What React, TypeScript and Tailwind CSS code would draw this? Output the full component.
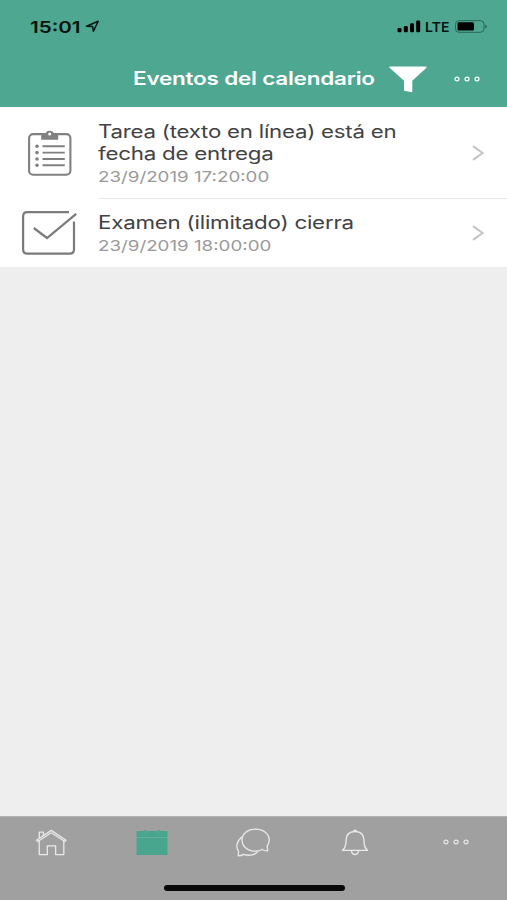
import React from "react";

function Dots({ className }: { className: string }) {
  return (
    <svg className={className} viewBox="0 0 28 8" fill="none" stroke="currentColor" strokeWidth="1.2">
      <ellipse cx="4" cy="4" rx="2" ry="1.8" />
      <ellipse cx="14" cy="4" rx="2" ry="1.8" />
      <ellipse cx="24" cy="4" rx="2" ry="1.8" />
    </svg>
  );
}

function StatusBar() {
  return (
    <div className="flex h-[52px] items-start justify-between pl-[30px] pr-[18px] pt-[16px] text-[#06150f]">
      <div className="flex items-start">
        <span className="w-[55px] origin-left scale-x-[1.25] whitespace-nowrap text-[16.5px] font-semibold leading-[22px]">15:01</span>
        <svg className="mt-[4px] h-[13px] w-[16px]" viewBox="0 0 16 13" fill="none" stroke="currentColor" strokeWidth="1.5" strokeLinejoin="round">
          <path d="M1.5 6.2 13.2 1.3 8.4 11.3 7.6 6.5Z" />
        </svg>
      </div>
      <div className="flex items-start">
        <svg className="mt-[4px] h-[13px] w-[25px]" viewBox="0 0 25 13" fill="#000">
          <rect x="0.5" y="8" width="4" height="4.3" rx="1.2" />
          <rect x="6.8" y="6" width="4" height="6.3" rx="1.2" />
          <rect x="13" y="3.3" width="4" height="9" rx="1.2" />
          <rect x="19.2" y="0.5" width="4" height="11.8" rx="1.2" />
        </svg>
        <span className="ml-[3px] w-[30px] origin-left scale-x-[1.08] text-[13px] font-semibold leading-[22px]">LTE</span>
        <svg className="mt-[4px] h-[13px] w-[34px]" viewBox="0 0 34 13">
          <rect x="0.5" y="0.7" width="28.5" height="11.6" rx="3.6" fill="none" stroke="#2b6756" strokeWidth="1" />
          <rect x="2.5" y="2.3" width="16.5" height="8.2" rx="1.5" fill="#000" />
          <path d="M30.2 4.5C32.6 5.4 32.6 7.6 30.2 8.5Z" fill="#2b6756" />
        </svg>
      </div>
    </div>
  );
}

function Clipboard() {
  return (
    <svg className="h-[46px] w-[46px]" viewBox="0 0 46 46" fill="none" stroke="#808080">
      <rect x="2.1" y="4.1" width="41.3" height="40.6" rx="4" strokeWidth="2.1" />
      <path d="M14.2 4.2H18.5C18.7 1.8 20.5.8 22.7.8S26.7 1.8 27 4.2H31.2V9.8H14.2Z" fill="#808080" stroke="none" />
      <circle cx="22.7" cy="4.1" r="1.5" fill="#fff" stroke="none" />
      <path d="M15.5 16.2H37.8M15.5 22.6H37.8M15.5 29H37.8M15.5 35.3H37.8" strokeWidth="1.9" />
      <g fill="#808080" stroke="none">
        <circle cx="10" cy="16.2" r="1.8" />
        <circle cx="10" cy="22.6" r="1.8" />
        <circle cx="10" cy="29" r="1.8" />
        <circle cx="10" cy="35.3" r="1.8" />
      </g>
    </svg>
  );
}

function CheckBox() {
  return (
    <svg className="h-[46px] w-[56px]" viewBox="0 0 56 46" fill="none" stroke="#7b7b7b" strokeWidth="2.2">
      <path d="M48 2.2H6.5Q2.1 2.2 2.1 6.4V39.2Q2.1 43.6 6.5 43.6H48.6Q53 43.6 53 39.2V11.5" />
      <path d="M12.8 18 26 28 55.2 3.8" />
    </svg>
  );
}

function Chevron() {
  return (
    <svg className="h-[16px] w-[12px]" viewBox="0 0 12 16" fill="none" stroke="#c4c4c6" strokeWidth="2.1">
      <path d="M1 1.2 10.5 8 1 14.8" />
    </svg>
  );
}

export default function App() {
  return (
    <div className="flex h-[900px] w-[507px] flex-col overflow-hidden bg-[#eeeeee] font-['Inter','Liberation_Sans',sans-serif]">
      <header className="h-[107px] shrink-0 bg-[#4ea791]">
        <StatusBar />
        <div className="flex h-[54px] items-center pl-[133px] text-white">
          <h1 className="w-[256px] origin-left scale-x-[1.25] whitespace-nowrap text-[18px] font-semibold leading-[24px] tracking-[-0.01em]">Eventos del calendario</h1>
          <svg className="h-[28px] w-[38px]" viewBox="0 0 38 28" fill="currentColor">
            <path d="M.3 2.5Q.3 1.5 1.3 1.5H36.5Q37.6 1.5 37.5 2.8L23.3 15.8V27.3L15 25.7V15.8Z" />
          </svg>
          <Dots className="ml-[26px] h-[8px] w-[28px]" />
        </div>
      </header>

      <main className="flex-1">
        <ul className="bg-white">
          <li className="flex h-[92px]">
            <div className="flex w-[98px] shrink-0 pl-[27px] pt-[23px]"><Clipboard /></div>
            <div className="flex-1 border-b border-[#e9e9e9] pt-[14px]">
              <p className="w-fit origin-left scale-x-[1.235] whitespace-nowrap text-[18px] leading-[22px] tracking-[-0.01em] text-[#424242]">Tarea (texto en línea) está en</p>
              <p className="w-fit origin-left scale-x-[1.24] whitespace-nowrap text-[18px] leading-[22px] tracking-[-0.01em] text-[#424242]">fecha de entrega</p>
              <p className="mt-[2px] w-fit origin-left scale-x-[1.25] whitespace-nowrap text-[15px] leading-[20px] text-[#9a9a9a]">23/9/2019 17:20:00</p>
            </div>
            <div className="w-[35px] border-b border-[#e9e9e9] pt-[38px]"><Chevron /></div>
          </li>
          <li className="flex h-[68px]">
            <div className="flex w-[98px] shrink-0 pl-[21px] pt-[11px]"><CheckBox /></div>
            <div className="flex-1 pt-[13px]">
              <p className="w-fit origin-left scale-x-[1.24] whitespace-nowrap text-[18px] leading-[22px] tracking-[-0.01em] text-[#424242]">Examen (ilimitado) cierra</p>
              <p className="mt-[2px] w-fit origin-left scale-x-[1.25] whitespace-nowrap text-[15px] leading-[20px] text-[#9a9a9a]">23/9/2019 18:00:00</p>
            </div>
            <div className="w-[35px] pt-[26px]"><Chevron /></div>
          </li>
        </ul>
      </main>

      <footer className="flex h-[84px] shrink-0 flex-col border-t border-[#b2b2b2] bg-[#a0a0a0] text-[#e9e9e9]">
        <nav className="grid h-[50px] grid-cols-5 items-center justify-items-center">
          <svg className="mb-px h-[28px] w-[32px]" viewBox="0 0 32 28" fill="none" stroke="currentColor" strokeWidth="1.3" strokeLinejoin="round">
            <path d="M4.2 12.3V26.6H12.3V17.8H20.6V26.6H28.8V12.3" />
            <path d="M1.5 12.2 16.3 2.4 31 12.2 29.8 13.5 16.3 4.8 2.8 13.5Z" />
            <path d="M4.3 10.1V4.2H8.4V7.4" />
          </svg>
          <svg className="mb-px h-[28px] w-[32px]" viewBox="0 0 32 28">
            <path d="M.5 3H8V2H10V3H22V2H24V3H31.5V9H.5ZM.5 10H31.5V27H.5Z" fill="#48a68e" />
            <path d="M.5 9.5H31.5" stroke="#67ae9a" />
            <path d="M9 3V6M23 3V6" stroke="#5fa994" />
          </svg>
          <svg className="mb-px h-[30px] w-[36px]" viewBox="0 0 36 30" fill="none" stroke="currentColor" strokeWidth="1.3" strokeLinejoin="round">
            <path d="M20.5 2.2C12.7 2.2 7 6.7 7 13s5.6 11.2 13.5 11.2c2.7 0 4.8-.6 6.7-1.7 1.6.9 3.5 1.4 5.5 1.3L32.2 19C33.5 17.2 34.2 15.2 34.2 13 34.2 6.7 28.3 2.2 20.5 2.2Z" />
            <path d="M7.5 9.5C1.5 14 .5 20 3.5 24.2L3.3 28.8C5.5 28.8 7 28.4 8.6 27.4 14.2 29.3 20.4 27.9 23 24.1" />
          </svg>
          <svg className="mb-px h-[28px] w-[28px]" viewBox="0 0 28 28" fill="none" stroke="currentColor" strokeWidth="1.4" strokeLinejoin="round">
            <path d="M1.5 22.4H26.5C23.6 20.2 23 17.2 23 12.8 23 6.7 19.4 3.5 14 3.5S5 6.7 5 12.8C5 17.2 4.4 20.2 1.5 22.4Z" />
            <path d="M12.5 3.4Q12.7 2.2 14 2.2T15.5 3.4M10.4 22.7C10.8 25.5 12 26.5 14 26.5S17.2 25.5 17.6 22.7" />
          </svg>
          <Dots className="mb-px h-[8px] w-[28px]" />
        </nav>
        <div className="ml-[164px] mt-[18px] h-[6px] w-[181px] rounded-full bg-[#090909]" />
      </footer>
    </div>
  );
}
